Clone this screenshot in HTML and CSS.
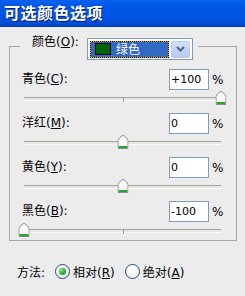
FILE: index.html
```html
<!DOCTYPE html>
<html lang="zh-CN">
<head>
    <meta charset="UTF-8">
    <title>可选颜色选项</title>
    <link rel="stylesheet" href="styles.css">
</head>
<body>
    <div class="titlebar">可选颜色选项</div>

    <div class="group">
        <div class="group-head">
            <span class="head-label">颜色(<u>O</u>):</span>
            <div class="select">
                <div class="sel-value">
                    <span class="swatch"></span>
                    <span class="sel-text">绿色</span>
                </div>
                <div class="sel-btn">
                    <svg width="9" height="6" viewBox="0 0 9 6"><path d="M1 1 L4.5 4.5 L8 1" fill="none" stroke="#4d6185" stroke-width="2"/></svg>
                </div>
            </div>
        </div>

        <div class="row">
            <span class="label">青色(<u>C</u>):</span>
            <div class="input">+100</div>
            <span class="pct">%</span>
        </div>
        <div class="slider">
            <div class="track"><span class="tick"></span></div>
            <span class="thumb" style="left: 100%"><svg width="11" height="14" viewBox="0 0 11 14"><path d="M0.5 13.5 V5 L4 1 Q5.5 0 7 1 L10.5 5 V13.5 Z" fill="#fafaf8" stroke="#8c8c8c"/><rect x="1" y="11" width="9" height="2" fill="#22a832"/></svg></span>
        </div>

        <div class="row">
            <span class="label">洋红(<u>M</u>):</span>
            <div class="input">0</div>
            <span class="pct">%</span>
        </div>
        <div class="slider">
            <div class="track"><span class="tick"></span></div>
            <span class="thumb" style="left: 50%"><svg width="11" height="14" viewBox="0 0 11 14"><path d="M0.5 13.5 V5 L4 1 Q5.5 0 7 1 L10.5 5 V13.5 Z" fill="#fafaf8" stroke="#8c8c8c"/><rect x="1" y="11" width="9" height="2" fill="#22a832"/></svg></span>
        </div>

        <div class="row">
            <span class="label">黄色(<u>Y</u>):</span>
            <div class="input">0</div>
            <span class="pct">%</span>
        </div>
        <div class="slider">
            <div class="track"><span class="tick"></span></div>
            <span class="thumb" style="left: 50%"><svg width="11" height="14" viewBox="0 0 11 14"><path d="M0.5 13.5 V5 L4 1 Q5.5 0 7 1 L10.5 5 V13.5 Z" fill="#fafaf8" stroke="#8c8c8c"/><rect x="1" y="11" width="9" height="2" fill="#22a832"/></svg></span>
        </div>

        <div class="row">
            <span class="label">黑色(<u>B</u>):</span>
            <div class="input">-100</div>
            <span class="pct">%</span>
        </div>
        <div class="slider">
            <div class="track"><span class="tick"></span></div>
            <span class="thumb" style="left: 0%"><svg width="11" height="14" viewBox="0 0 11 14"><path d="M0.5 13.5 V5 L4 1 Q5.5 0 7 1 L10.5 5 V13.5 Z" fill="#fafaf8" stroke="#8c8c8c"/><rect x="1" y="11" width="9" height="2" fill="#22a832"/></svg></span>
        </div>
    </div>

    <div class="method">
        <span class="method-label">方法:</span>
        <span class="radio checked"></span>
        <span class="radio-text">相对(<u>R</u>)</span>
        <span class="radio"></span>
        <span class="radio-text">绝对(<u>A</u>)</span>
    </div>
</body>
</html>
```

FILE: styles.css
```css
body {
    margin: 0;
    width: 245px;
    height: 296px;
    overflow: hidden;
    background: #ececec;
    font-family: "DejaVu Sans", "Noto Sans CJK SC", sans-serif;
    font-size: 12px;
    color: #000;
    white-space: nowrap;
}
u {
    text-decoration: underline;
    text-underline-offset: 1px;
}
.titlebar {
    height: 27px;
    line-height: 25px;
    padding-left: 4px;
    background: linear-gradient(#0a62f0 0%, #0059e8 15%, #0055e3 60%, #004ed8 85%, #003fb8 100%);
    color: #fff;
    font-family: "Noto Sans CJK SC", sans-serif;
    font-weight: bold;
    font-size: 16px;
    letter-spacing: 0.5px;
    text-shadow: 1px 1px 0 #0a1a70;
}
.group {
    margin: 19px 8px 0 9px;
    border: 1px solid #a6a6a6;
    padding-bottom: 3px;
}
.group-head {
    display: flex;
    align-items: flex-start;
    width: fit-content;
    margin: -9px 0 0 10px;
    padding: 0 5px 0 12px;
    background: #ececec;
}
.head-label {
    width: 46px;
    line-height: 14px;
    margin-top: -3px;
}
.select {
    display: flex;
    align-items: center;
    width: 104px;
    height: 20px;
    margin-left: 9px;
    border: 1px solid #7f9db9;
    background: #fff;
}
.sel-value {
    display: flex;
    align-items: center;
    width: 77px;
    height: 15px;
    margin-left: 2px;
    border: 1px dotted #000;
    background: linear-gradient(#316ac5, #316ac5) padding-box, linear-gradient(#e9a030, #e9a030) border-box;
}
.swatch {
    width: 14px;
    height: 10px;
    margin-left: 4px;
    border: 1px solid #000;
    background: #006400;
}
.sel-text {
    margin-left: 5px;
    color: #fff;
    font-family: "Noto Sans CJK SC", sans-serif;
    line-height: 14px;
}
.sel-btn {
    display: flex;
    align-items: center;
    justify-content: center;
    width: 17px;
    height: 15px;
    margin-left: 2px;
    border: 1px solid #b9cbf3;
    border-radius: 2px;
    background: linear-gradient(#d2defb, #b8cbf6);
}
.row {
    display: flex;
    align-items: center;
    height: 21px;
    margin-top: 9px;
    padding: 0 10px 0 12px;
}
.slider + .row {
    margin-top: 8px;
}
.label {
    flex: 1;
    line-height: 14px;
    margin-top: -2px;
}
.input {
    width: 37px;
    height: 19px;
    line-height: 19px;
    padding-left: 1px;
    border: 1px solid #7f9db9;
    background: #fff;
    font-size: 11px;
}
.pct {
    width: 14px;
    margin-left: 3px;
    font-size: 12px;
}
.slider {
    position: relative;
    box-sizing: border-box;
    height: 14px;
    padding-top: 6px;
    margin: 1px 15px 0 14px;
}
.track {
    position: relative;
    height: 2px;
    border-top: 1px solid #a2a2a0;
    border-bottom: 1px solid #fbfbf8;
    background: #e6e5e0;
}
.tick {
    position: absolute;
    left: 50%;
    top: 0;
    width: 1px;
    height: 4px;
    background: #a2a2a0;
}
.thumb {
    position: absolute;
    top: 0;
    width: 11px;
    height: 14px;
    transform: translateX(-50%);
}
.thumb svg {
    display: block;
}
.method {
    display: flex;
    align-items: center;
    height: 15px;
    margin-top: 23px;
    padding-left: 17px;
}
.method-label {
    width: 38px;
}
.radio {
    width: 13px;
    height: 13px;
    border: 1px solid #1c5180;
    border-radius: 50%;
    background: radial-gradient(circle at 40% 40%, #fff 30%, #e2e2dc 100%);
    position: relative;
}
.radio.checked::after {
    content: "";
    position: absolute;
    left: 3px;
    top: 3px;
    width: 7px;
    height: 7px;
    border-radius: 50%;
    background: radial-gradient(circle at 35% 35%, #8ee28e 0%, #2fb12f 50%, #1a8a1a 100%);
}
.radio-text {
    margin: 0 10px 0 3px;
}
```
